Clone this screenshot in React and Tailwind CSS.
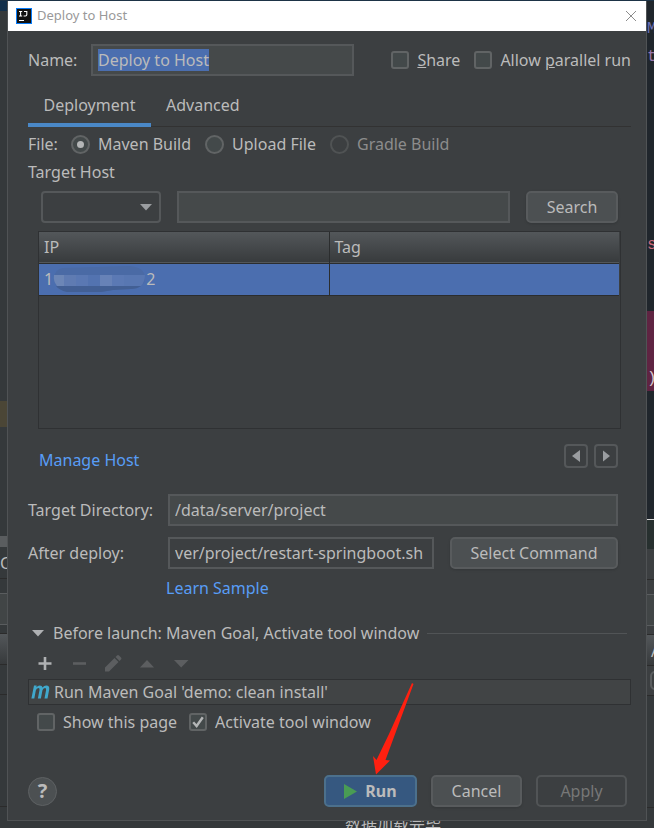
import { useEffect, useRef, useState } from 'react'

const inputCls = 'h-8 min-w-0 border-2 border-[#55585a] bg-[#45494a] px-[5px] text-[#bbbbbb] outline-none'
const btnCls = 'h-8 rounded-[5px] border-2 border-[#585b5d] bg-[#4c5052] text-[#bbbbbb] shadow-sm'

function Check({ label, checked = false }) {
  const [on, setOn] = useState(checked)
  return (
    <label className="flex items-center gap-2 whitespace-nowrap">
      <span className="relative flex">
        <input type="checkbox" checked={on} onChange={e => setOn(e.target.checked)}
          className="h-[18px] w-[18px] appearance-none rounded-[3px] border-2 border-[#616465] bg-[#43494a] outline-none" />
        {on && (
          <svg viewBox="0 0 18 18" className="pointer-events-none absolute inset-0 h-[18px] w-[18px]">
            <path d="M4.2 9.2 L7.6 13 L13.8 4.2" fill="none" stroke="#b4b6b7" strokeWidth="2.4" />
          </svg>
        )}
      </span>
      <span>{label}</span>
    </label>
  )
}

function Radio({ label, value, current, onPick, disabled }) {
  const on = current === value
  return (
    <label className={`flex items-center gap-2 whitespace-nowrap ${disabled ? 'text-[#8c8c8c]' : ''}`}>
      <span className="relative flex">
        <input type="radio" name="file" value={value} checked={on} disabled={disabled} onChange={() => onPick(value)}
          className={`h-[19px] w-[19px] appearance-none rounded-full border-2 ${
            disabled ? 'border-[#505354]' : 'border-[#616465] bg-[#43494a]'
          }`} />
        {on && <span className="pointer-events-none absolute inset-[6px] rounded-full bg-[#b4b6b7]" />}
      </span>
      <span>{label}</span>
    </label>
  )
}

function LeftEdge() {
  return (
    <div className="flex w-[7px] shrink-0 flex-col overflow-hidden bg-[#35393b] text-[#bbbbbb]">
      <div className="h-[10px] bg-[#13304b]" />
      <div className="h-[390px]" />
      <div className="h-[26px] bg-[#4b4636]" />
      <div className="h-[109px]" />
      <div className="h-[11px] bg-[#5a5d5f]" />
      <div className="flex h-8 items-center border-b border-[#2b2b2b] text-base">C</div>
      <div className="h-[14px]" />
      <div className="h-8 border-y border-[#5a5d5f] bg-[#414546]" />
      <div className="h-2" />
      <div className="h-8 border-y border-[#2b2b2b] bg-gradient-to-b from-[#53575a] to-[#373a3c]" />
      <div className="h-[30px] border-b border-[#2b2b2b]" />
      <div className="h-28 border-b border-[#2b2b2b]" />
    </div>
  )
}

function RightEdge() {
  return (
    <div className="flex w-[7px] shrink-0 flex-col overflow-hidden bg-[#20262c] font-['Liberation_Mono'] text-base">
      <div className="h-4" />
      <div className="h-6 leading-6 text-[#6a70b8]">M</div>
      <div className="h-8 leading-8 text-[#9876aa]">t</div>
      <div className="h-40" />
      <div className="h-6 leading-6 text-[#c9687a]">s</div>
      <div className="h-[54px]" />
      <div className="flex h-20 items-end bg-[#5f2442] text-[#d5c6d0]">)</div>
      <div className="h-32" />
      <div className="h-[30px] border-t border-[#d8d8d8] bg-[#27302f]" />
      <div className="h-[31px] border-b border-[#2b2b2b] bg-[#3c3f41]" />
      <div className="h-[14px] bg-[#3c3f41]" />
      <div className="h-8 border-y border-[#5a5d5f] bg-[#414546]" />
      <div className="h-2 bg-[#3c3f41]" />
      <div className="h-8 border-y border-[#2b2b2b] bg-gradient-to-b from-[#53575a] to-[#373a3c] pl-1 leading-8 font-['Noto_Sans'] text-[#bbbbbb]">A</div>
      <div className="h-[30px] border-b border-[#2b2b2b] bg-[#3c3f41] py-[5px] pl-[3px]">
        <div className="h-[19px] w-5 rounded-[5px] border-2 border-[#5a5d5f]" />
      </div>
      <div className="h-28 border-b border-[#2b2b2b] bg-[#35393b]" />
      <div className="grow bg-[#35393b]" />
    </div>
  )
}

function HostTable() {
  return (
    <div className="ml-[10px] mr-[10px] mt-2 h-[198px] border border-[#2f3133] pr-px">
      <table className="w-full table-fixed border-collapse text-left">
        <thead>
          <tr className="h-[31px] border-b border-[#2b2d2e] bg-gradient-to-b from-[#53575a] to-[#383b3d]">
            <th className="border-r border-[#2b2d2e] px-[5px] font-normal">IP</th>
            <th className="px-[5px] font-normal">Tag</th>
          </tr>
        </thead>
        <tbody>
          <tr className="h-8 border-b border-[#2b2d2e] bg-[#4b6eaf]">
            <td className="border-r border-[#2b2d2e] px-[5px]">
              <span className="flex items-center">
                1
                <svg width="93" height="28" viewBox="0 0 93 28" aria-hidden="true">
                  <path d="M1 13 Q2 4 10 3 L45 2 L76 1 Q92 2 92 13 Q92 22 78 24 L60 25 L48 27 L14 27 Q3 24 1 13Z" fill="#4a6aa5" />
                  <path d="M3 21 H88 Q84 24 78 24 L60 25 L48 27 L14 27 Q6 25 3 21Z" fill="#425f94" />
                  <path d="M1 10 H11 V21 H4 Q0 16 1 10Z" fill="#6c86b6" />
                  <path d="M11 10 H23 V21 H11Z" fill="#5f7bb2" />
                  <path d="M23 10 H35 V21 H23Z" fill="#5a78b3" />
                  <path d="M35 10 H47 V21 H35Z" fill="#5373b0" />
                  <path d="M47 10 H59 V21 H47Z" fill="#6782b7" />
                  <path d="M59 10 H71 V21 H59Z" fill="#5b79b4" />
                  <path d="M71 10 H92 Q92 17 88 21 H71Z" fill="#5877b2" />
                </svg>
                2
              </span>
            </td>
            <td />
          </tr>
        </tbody>
      </table>
    </div>
  )
}

function BeforeLaunch() {
  return (
    <section>
      <div className="mt-[14px] flex h-6 items-center gap-2 pl-1 pr-1">
        <button aria-label="Collapse" className="mr-px">
          <svg width="12" height="8" viewBox="0 0 12 8"><path d="M0 1 H12 L6 7.5Z" fill="#afb1b3" /></svg>
        </button>
        <h2 className="whitespace-nowrap">Before launch: Maven Goal, Activate tool window</h2>
        <div className="h-px grow bg-[#515456]" />
      </div>

      <div className="mt-1 flex h-7 items-center gap-[14px] pl-[7px]">
        <button aria-label="Add">
          <svg width="20" height="20" viewBox="0 0 20 20"><path d="M8.7 4 H11.3 V9.2 H16.5 V11.8 H11.3 V17 H8.7 V11.8 H3.5 V9.2 H8.7Z" fill="#afb1b3" /></svg>
        </button>
        <button aria-label="Remove" disabled>
          <svg width="20" height="20" viewBox="0 0 20 20"><path d="M4 9.2 H17 V11.8 H4Z" fill="#5c5e60" /></svg>
        </button>
        <button aria-label="Edit" disabled>
          <svg width="20" height="20" viewBox="0 0 20 20">
            <path d="M2 14.5 L11.5 5 L15.5 9 L6 18.5 H2Z M12.5 4 L14 2.5 Q15 1.5 16 2.5 L18 4.5 Q19 5.5 18 6.5 L16.5 8Z" fill="#5c5e60" />
          </svg>
        </button>
        <button aria-label="Move up" disabled>
          <svg width="20" height="20" viewBox="0 0 20 20"><path d="M3 14.5 L10 7 L17 14.5Z" fill="#5c5e60" /></svg>
        </button>
        <button aria-label="Move down" disabled>
          <svg width="20" height="20" viewBox="0 0 20 20"><path d="M3 7 H17.5 L10.2 14.5Z" fill="#5c5e60" /></svg>
        </button>
      </div>

      <div className="mt-[2px] flex h-[26px] items-center gap-1 border border-[#2f3133] bg-[#414445] px-[2px]">
        <svg width="19" height="14" viewBox="0 0 19 14" fill="#40a8cc">
          <path d="M3 0.6 H5.7 L5.4 2.2 Q7 0.3 8.9 0.4 Q11.2 0.5 11.5 2.4 Q13.2 0.3 15.3 0.4 Q18.8 0.6 18.2 4.4 L16.5 13.4 H13.5 L15.1 4.9 Q15.4 2.9 14 2.9 Q12 3 11.4 5.6 L9.9 13.4 H6.9 L8.5 4.9 Q8.8 2.9 7.4 2.9 Q5.4 3 4.8 5.6 L3.3 13.4 H0.4Z" />
        </svg>
        <span className="whitespace-nowrap">Run Maven Goal 'demo: clean install'</span>
      </div>

      <div className="flex h-[34px] items-center gap-3 pl-[9px]">
        <Check label="Show this page" />
        <Check label="Activate tool window" checked />
      </div>
    </section>
  )
}

export default function App() {
  const nameRef = useRef(null)
  const [file, setFile] = useState('maven')

  useEffect(() => {
    nameRef.current.focus()
    nameRef.current.select()
  }, [])

  return (
    <div className="flex min-h-screen flex-col overflow-hidden bg-[#35393b] font-['Noto_Sans','Noto_Sans_CJK_SC',sans-serif] text-base text-[#bbbbbb]">
      <div className="h-px bg-[#1d3346]" />
      <div className="flex">
        <LeftEdge />
        <main className="min-w-0 grow border border-t-0 border-[#505355] bg-[#3c3f41]">
          <header className="flex h-[30px] items-center bg-white pl-2 pr-[9px]">
            <svg width="16" height="16" viewBox="0 0 16 16" className="mr-[5px]">
              <rect width="16" height="16" fill="#087cfa" />
              <rect x="1" y="1" width="14" height="14" fill="#111" />
              <path d="M3 3.5 H6.2 M4.6 3.5 V8 M3 8 H6.2 M8 3.5 H10.8 V6.8 Q10.8 8 9.4 8 H7.6 M3 12.5 H8" stroke="#fff" strokeWidth="1.1" fill="none" />
            </svg>
            <h1 className="text-[13px] text-[#999999]">Deploy to Host</h1>
            <button aria-label="Close" className="ml-auto">
              <svg width="12" height="12" viewBox="0 0 12 12"><path d="M1 1 L11 11 M11 1 L1 11" stroke="#8c8c8c" strokeWidth="1" /></svg>
            </button>
          </header>

          <div className="pb-[13px] pl-5 pr-[15px] pt-[13px]">
            <div className="flex items-center">
              <label htmlFor="name" className="w-[63px] shrink-0">Name:</label>
              <input id="name" ref={nameRef} defaultValue="Deploy to Host"
                className={`${inputCls} w-[263px] selection:bg-[#4b6eaf] selection:text-[#bbbbbb]`} />
              <div className="ml-auto flex gap-[14px]">
                <Check label={<><u>S</u>hare</>} />
                <Check label={<>Allow <u>p</u>arallel run</>} />
              </div>
            </div>

            <div role="tablist" className="mt-2 flex h-[43px] shadow-[inset_0_-1px_0_#323232]">
              <button role="tab" aria-selected="true" className="w-[123px] border-b-4 border-[#4a88c7] pt-[2px]">Deployment</button>
              <button role="tab" aria-selected="false" className="border-b-4 border-transparent px-[15px] pt-[2px]">Advanced</button>
            </div>

            <div className="flex h-[34px] items-center gap-[14px]">
              <span className="w-[29px]">File:</span>
              <Radio label="Maven Build" value="maven" current={file} onPick={setFile} />
              <Radio label="Upload File" value="upload" current={file} onPick={setFile} />
              <Radio label="Gradle Build" value="gradle" current={file} onPick={setFile} disabled />
            </div>

            <h2 className="h-[22px] leading-[22px]">Target Host</h2>

            <div className="mt-2 flex pl-[13px] pr-[13px]">
              <div className="relative mr-4 flex">
                <select aria-label="Filter" className="h-8 w-[120px] appearance-none rounded-[4px] border-2 border-[#55585a] bg-[#3c3f41]">
                  <option></option>
                </select>
                <svg width="12" height="7" viewBox="0 0 12 7" className="pointer-events-none absolute right-[9px] top-[13px]">
                  <path d="M0 0 H12 L6 6.5Z" fill="#9a9da0" />
                </svg>
              </div>
              <input aria-label="Host" className={`${inputCls} mr-4 grow`} />
              <button className={`${btnCls} w-[92px]`}>Search</button>
            </div>

            <HostTable />

            <div className="mt-[15px] flex h-6 items-center gap-[6px] pl-[11px] pr-[13px]">
              <a href="#hosts" className="mr-auto pt-2 text-[#589df6]">Manage Host</a>
              <button aria-label="Previous page" className="flex h-6 w-6 items-center justify-center rounded-[4px] border-2 border-[#55585a]">
                <svg width="10" height="12" viewBox="0 0 10 12"><path d="M9 0 V12 L1 6Z" fill="#9a9da0" /></svg>
              </button>
              <button aria-label="Next page" className="flex h-6 w-6 items-center justify-center rounded-[4px] border-2 border-[#55585a]">
                <svg width="8" height="12" viewBox="0 0 8 12"><path d="M1 0.5 V11.5 L8 6Z" fill="#9a9da0" /></svg>
              </button>
            </div>

            <div className="mt-[26px] flex items-center pr-[13px]">
              <label htmlFor="dir" className="w-[140px] shrink-0 whitespace-nowrap">Target Directory:</label>
              <input id="dir" defaultValue="/data/server/project" className={`${inputCls} grow`} />
            </div>
            <div className="mt-[11px] flex items-center pr-[13px]">
              <label htmlFor="after" className="w-[140px] shrink-0">After deploy:</label>
              <input id="after" defaultValue="ver/project/restart-springboot.sh"
                className="mr-4 h-8 min-w-0 grow border-2 border-[#55585a] bg-[#3c3f41] px-[5px] text-[#bbbbbb] outline-none" />
              <button className={`${btnCls} w-[168px] shrink-0`}>Select Command</button>
            </div>
            <div className="flex h-[38px] items-center pl-[138px]">
              <a href="#sample" className="text-[#589df6]">Learn Sample</a>
            </div>

            <BeforeLaunch />

            <footer className="mt-9 flex items-center gap-[14px] pr-1">
              <button aria-label="Help" className="mr-auto flex h-[29px] w-[29px] items-center justify-center rounded-full border border-[#5e6163] bg-[#4c5052]">
                <span className="text-xl font-bold leading-none">?</span>
              </button>
              <div className="relative">
                <button className="flex h-8 w-[93px] items-center justify-center gap-2 rounded-[5px] border-2 border-[#4c708c] bg-[#365880] font-bold">
                  <svg width="13" height="15" viewBox="0 0 13 15"><path d="M0 0 L13 7.5 L0 15Z" fill="#499c54" /></svg>
                  Run
                </button>
                <svg width="42" height="93" viewBox="0 0 42 93" className="pointer-events-none absolute bottom-full left-12">
                  <path d="M40 1 L41.5 2 L13.5 78 L18 78.5 L4 92.5 L1 74 L4.5 78 L17 52Z" fill="#ff2010" />
                </svg>
              </div>
              <button className={`${btnCls} w-[91px]`}>Cancel</button>
              <button disabled className="h-8 w-[91px] rounded-[5px] border-2 border-[#515456] text-[#777777]">Apply</button>
            </footer>
          </div>
        </main>
        <RightEdge />
      </div>
      <div className="h-[7px] overflow-hidden pl-[345px] leading-[7px]">数据加载完毕</div>
    </div>
  )
}
